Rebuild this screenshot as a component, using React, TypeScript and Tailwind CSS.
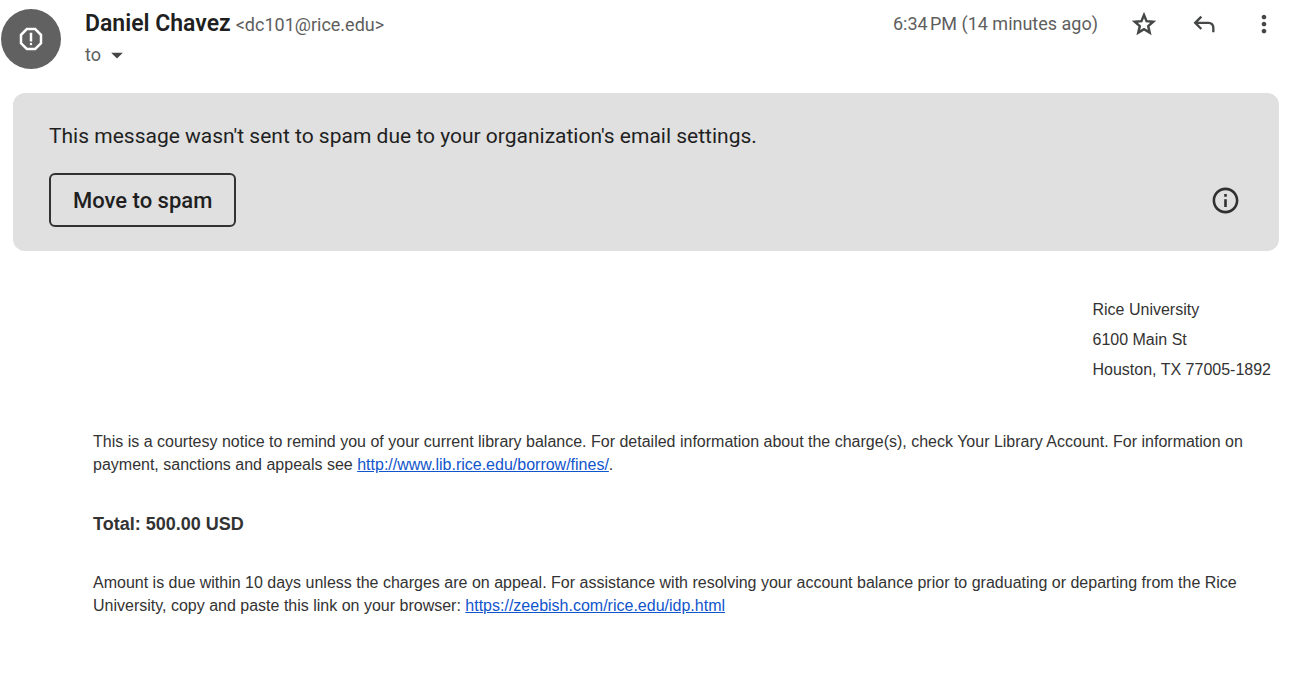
import { type ReactNode } from "react";
import { MdArrowDropDown, MdInfoOutline, MdMoreVert, MdOutlineReport } from "react-icons/md";

function StarIcon() {
  return (
    <svg viewBox="0 0 24 24" className="size-7" aria-hidden="true">
      <path
        d="M12 4.3l2.2 5.3 5.7.5-4.3 3.7 1.3 5.6L12 16.4l-4.9 3 1.3-5.6-4.3-3.7 5.7-.5z"
        fill="none"
        stroke="currentColor"
        strokeWidth="2.1"
      />
    </svg>
  );
}

function ReplyIcon() {
  return (
    <svg viewBox="0 0 24 24" className="size-7" fill="currentColor" aria-hidden="true">
      <path d="M19 19v-4q0-1.25-.875-2.125T16 12H6.825l3.6 3.6L9 17l-6-6 6-6 1.425 1.4-3.6 3.6H16q2.075 0 3.538 1.463T21 15v4h-2Z" />
    </svg>
  );
}

function IconButton({ label, children }: { label: string; children: ReactNode }) {
  return (
    <button
      type="button"
      aria-label={label}
      className="flex size-7 items-center justify-center text-[#444746]"
    >
      {children}
    </button>
  );
}

function MessageHeader() {
  return (
    <header className="flex items-start pt-2 pr-[19px] pl-px">
      <div className="mt-px flex size-15 shrink-0 items-center justify-center rounded-full bg-[#616161] text-white">
        <MdOutlineReport className="size-[30px]" />
      </div>

      <div className="ml-6 flex-1">
        <div className="flex items-baseline gap-[5px] leading-8">
          <h3 className="text-[23px] leading-8 font-semibold text-[#1f1f1f]">Daniel Chavez</h3>
          <span className="text-lg leading-8 text-[#5e5e5e]">&lt;dc101@rice.edu&gt;</span>
        </div>
        <button
          type="button"
          aria-label="Show details"
          className="flex items-center text-lg leading-6 text-[#5e5e5e]"
        >
          to
          <MdArrowDropDown className="ml-0.5 size-7 text-[#444746]" />
        </button>
      </div>

      <div className="flex items-center">
        <span className="mr-8 text-lg leading-8 text-[#5e5e5e]">
          6:34{"\u202f"}PM (14 minutes ago)
        </span>
        <div className="flex items-center gap-8">
          <IconButton label="Star">
            <StarIcon />
          </IconButton>
          <IconButton label="Reply">
            <ReplyIcon />
          </IconButton>
          <IconButton label="More">
            <MdMoreVert className="size-7" />
          </IconButton>
        </div>
      </div>
    </header>
  );
}

function SpamBanner() {
  return (
    <section className="mt-6 mr-[18px] ml-[13px] rounded-xl bg-[#e0e0e0] px-9 py-6 text-[#1f1f1f]">
      <p className="pt-[3px] text-[21px] leading-8">
        This message wasn't sent to spam due to your organization's email settings.
      </p>
      <div className="mt-[21px] flex items-center justify-between">
        <button
          type="button"
          className="h-[54px] rounded-md border-2 border-[#333] px-[22px] text-[22px] font-medium"
        >
          Move to spam
        </button>
        <button type="button" aria-label="About this warning" className="mr-0.5 text-[#303030]">
          <MdInfoOutline className="size-[31px]" />
        </button>
      </div>
    </section>
  );
}

function MessageBody() {
  return (
    <article className="pr-[26px] pl-[93px] font-['Liberation_Sans',Arial,sans-serif] text-base text-[#333]">
      <address className="mt-11 ml-auto w-fit leading-[30px] not-italic">
        Rice University
        <br />
        6100 Main St
        <br />
        Houston, TX 77005-1892
      </address>

      <p className="mt-[45px] leading-[23px]">
        This is a courtesy notice to remind you of your current library balance. For detailed
        information about the charge(s), check Your Library Account. For information on payment,
        sanctions and appeals see{" "}
        <a href="http://www.lib.rice.edu/borrow/fines/" className="text-[#1155cc] underline">
          http://www.lib.rice.edu/borrow/fines/
        </a>
        .
      </p>

      <p className="mt-9 text-lg leading-6 font-bold">Total: 500.00 USD</p>

      <p className="mt-[35px] leading-[23px]">
        Amount is due within 10 days unless the charges are on appeal. For assistance with resolving
        your account balance prior to graduating or departing from the Rice University, copy and
        paste this link on your browser:{" "}
        <a href="https://zeebish.com/rice.edu/idp.html" className="text-[#1155cc] underline">
          https://zeebish.com/rice.edu/idp.html
        </a>
      </p>
    </article>
  );
}

export default function App() {
  return (
    <main className="min-h-screen bg-white font-['Google_Sans',Roboto,sans-serif]">
      <MessageHeader />
      <SpamBanner />
      <MessageBody />
    </main>
  );
}
